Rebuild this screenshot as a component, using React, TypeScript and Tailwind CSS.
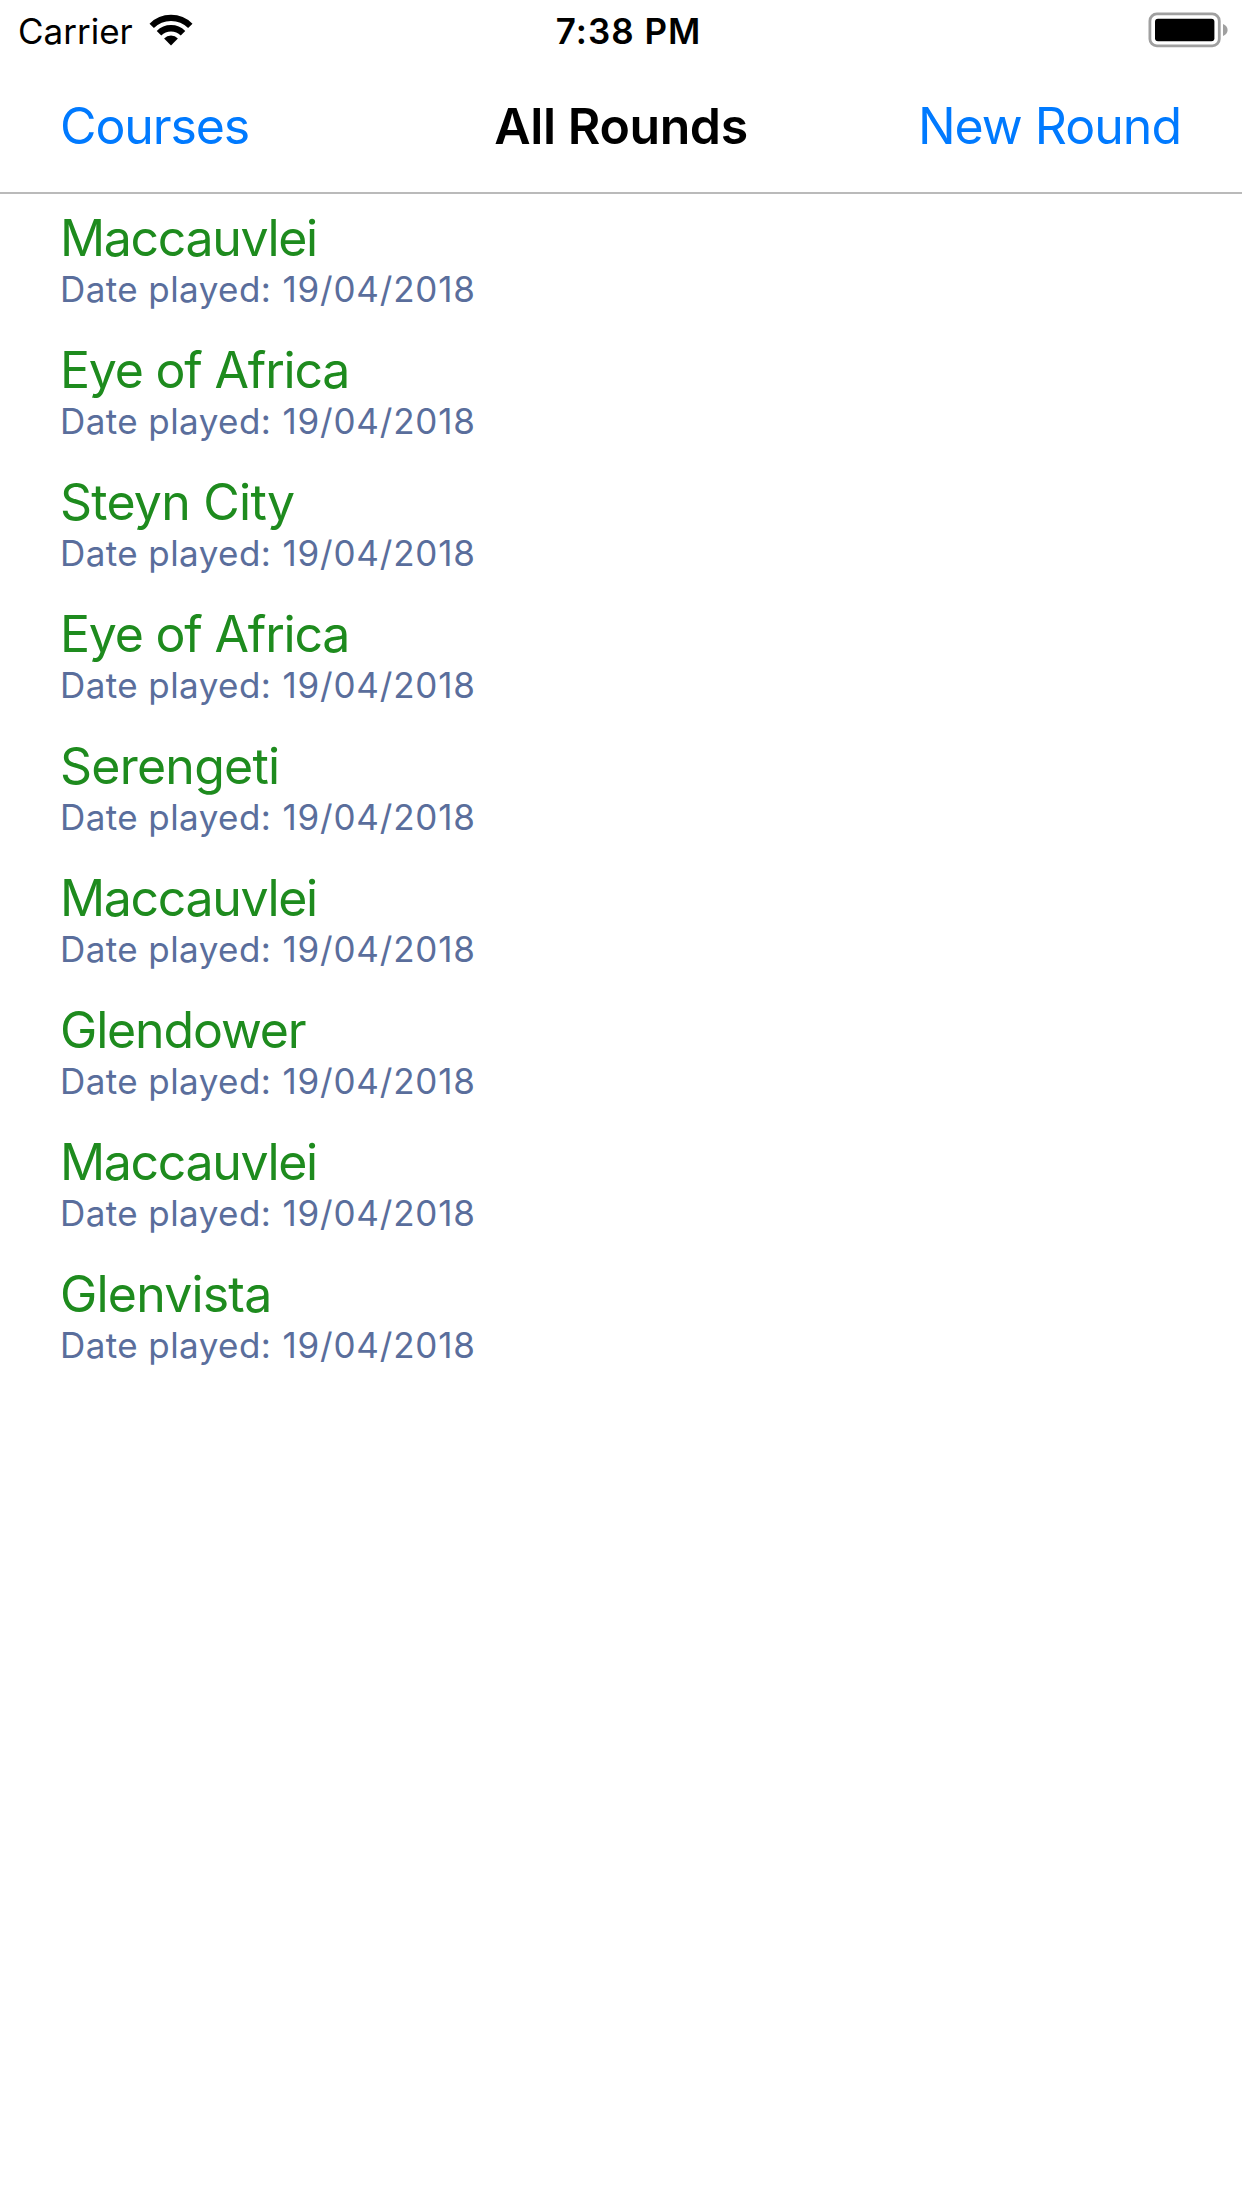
type Round = { course: string; tracking: string; date: string };

const rounds: Round[] = [
  { course: "Maccauvlei", tracking: "tracking-[-1.35px]", date: "19/04/2018" },
  { course: "Eye of Africa", tracking: "tracking-[-1.2px]", date: "19/04/2018" },
  { course: "Steyn City", tracking: "tracking-[-0.75px]", date: "19/04/2018" },
  { course: "Eye of Africa", tracking: "tracking-[-1.2px]", date: "19/04/2018" },
  { course: "Serengeti", tracking: "tracking-[-0.75px]", date: "19/04/2018" },
  { course: "Maccauvlei", tracking: "tracking-[-1.35px]", date: "19/04/2018" },
  { course: "Glendower", tracking: "tracking-[-1.15px]", date: "19/04/2018" },
  { course: "Maccauvlei", tracking: "tracking-[-1.35px]", date: "19/04/2018" },
  { course: "Glenvista", tracking: "tracking-[-0.8px]", date: "19/04/2018" },
];

function WifiIcon() {
  return (
    <svg className="h-[36px] w-[48px]" viewBox="0 0 48 36" fill="none" aria-hidden="true">
      <path d="M4.7 13.9A27.3 27.3 0 0 1 43.3 13.9" stroke="#000" strokeWidth="6.2" />
      <path d="M12 21.2A17 17 0 0 1 36 21.2" stroke="#000" strokeWidth="6.4" />
      <path d="M24 33.4L17.1 26.4A9.8 9.8 0 0 1 30.9 26.4Z" fill="#000" />
    </svg>
  );
}

function BatteryIcon() {
  return (
    <svg className="h-[36px] w-[80px]" viewBox="0 0 80 36" fill="none" aria-hidden="true">
      <rect x="1.9" y="1.9" width="69.4" height="32" rx="7" stroke="#a0a0a0" strokeWidth="2.8" />
      <rect x="7" y="6.8" width="59.4" height="22.4" rx="3" fill="#000" />
      <path d="M75 12V24C77.6 23 79.6 20.8 79.6 18S77.6 13 75 12Z" fill="#a0a0a0" />
    </svg>
  );
}

function StatusBar() {
  return (
    <div className="grid h-[60px] grid-cols-3 items-start text-[35px] leading-[42px] text-black">
      <div className="flex items-start pl-[18px]">
        <span className="pt-[10px]">Carrier</span>
        <span className="ml-[14px] pt-[12px]">
          <WifiIcon />
        </span>
      </div>
      <div className="pt-[10px] pl-[15px] text-center font-semibold tracking-[1px]">7:38 PM</div>
      <div className="flex justify-end pt-[12px] pr-[14px]">
        <BatteryIcon />
      </div>
    </div>
  );
}

function NavigationBar() {
  return (
    <header className="grid h-[134px] grid-cols-3 items-start border-b-2 border-[#bababa] px-[60px] pt-[36px] text-[50px] leading-[60px]">
      <button className="justify-self-start tracking-[-1.1px] text-[#007aff]">Courses</button>
      <h1 className="justify-self-center font-semibold tracking-[-0.4px] whitespace-nowrap text-black">All Rounds</h1>
      <button className="mr-px justify-self-end tracking-[-1px] whitespace-nowrap text-[#007aff]">New Round</button>
    </header>
  );
}

export default function App() {
  return (
    <div className="min-h-[2208px] w-[1242px] bg-white font-[Inter,sans-serif]">
      <StatusBar />
      <NavigationBar />
      <ul>
        {rounds.map((round, i) => (
          <li key={i} className="flex h-[132px] flex-col pt-[14px] pl-[60px]">
            <span className={`text-[50px] leading-[60px] text-[#1e8b1e] ${round.tracking}`}>{round.course}</span>
            <span className="text-[35px] leading-[42px] tracking-[0.42px] text-[#5a6e9c]">
              Date played: <span className="ml-px tracking-[0.8px]">{round.date}</span>
            </span>
          </li>
        ))}
      </ul>
    </div>
  );
}
